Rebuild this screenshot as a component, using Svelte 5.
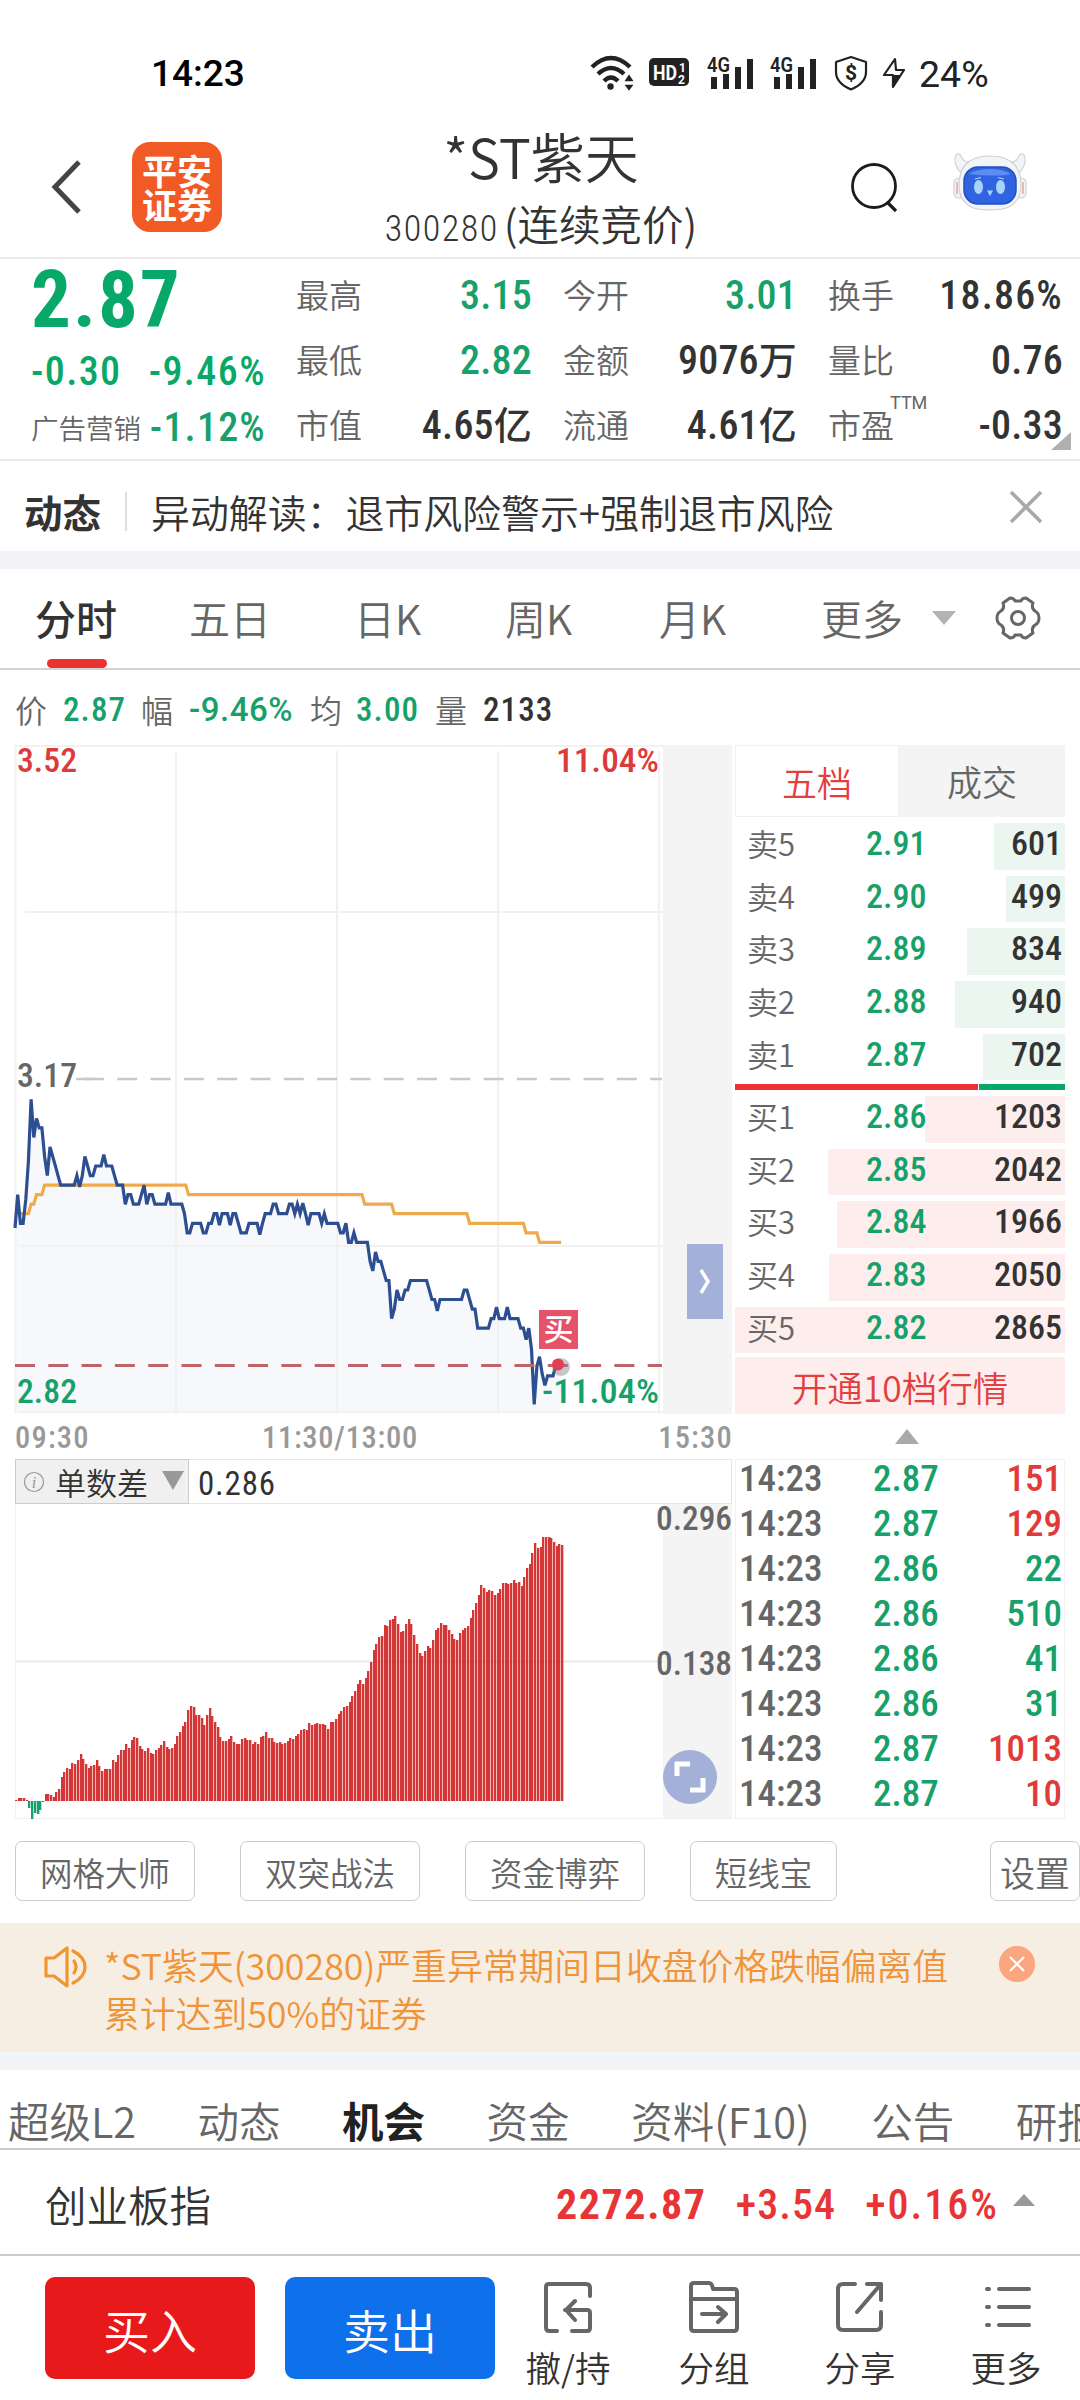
<script>
  const quotes = [
    { label: '最高', value: '3.15', tone: 'down' },
    { label: '今开', value: '3.01', tone: 'down' },
    { label: '换手', value: '18.86%', tone: 'percent' },
    { label: '最低', value: '2.82', tone: 'down' },
    { label: '金额', value: '9076', unit: '万' },
    { label: '量比', value: '0.76' },
    { label: '市值', value: '4.65', unit: '亿' },
    { label: '流通', value: '4.61', unit: '亿' },
    { label: '市盈', value: '-0.33', sup: 'TTM' },
  ];

  const periods = ['分时', '五日', '日K', '周K', '月K', '更多'];
  let period = '分时';

  // volume and the width of its depth bar
  const asks = [
    { name: '卖5', price: '2.91', volume: 601, bar: 71 },
    { name: '卖4', price: '2.90', volume: 499, bar: 59 },
    { name: '卖3', price: '2.89', volume: 834, bar: 98 },
    { name: '卖2', price: '2.88', volume: 940, bar: 110 },
    { name: '卖1', price: '2.87', volume: 702, bar: 82 },
  ];
  const bids = [
    { name: '买1', price: '2.86', volume: 1203, bar: 140 },
    { name: '买2', price: '2.85', volume: 2042, bar: 237 },
    { name: '买3', price: '2.84', volume: 1966, bar: 228 },
    { name: '买4', price: '2.83', volume: 2050, bar: 236 },
    { name: '买5', price: '2.82', volume: 2865, bar: 330 },
  ];

  const trades = [
    ['2.87', 151, 'up'],
    ['2.87', 129, 'up'],
    ['2.86', 22, 'down'],
    ['2.86', 510, 'down'],
    ['2.86', 41, 'down'],
    ['2.86', 31, 'down'],
    ['2.87', 1013, 'up'],
    ['2.87', 10, 'up'],
  ];

  // [minute of the session, price in cents]
  const price = [
    [0, 301.5], [1, 305], [2, 302], [3, 302], [4, 304.5], [5, 308.5], [6, 315], [7, 311], [8, 313], [9, 312],
    [10, 312], [11, 309], [12, 307], [13, 310], [14, 309], [15, 308], [16, 307], [17, 306], [22, 306],
    [23, 307], [24, 305.8], [25, 307], [26, 309], [27, 308], [28, 307], [29, 307], [30, 308], [32, 308],
    [33, 309.2], [34, 308], [36, 308], [37, 307], [38, 306], [40, 306], [41, 304], [42, 305], [43, 305],
    [44, 304], [46, 304], [47, 305], [48, 306], [49, 304], [50, 305], [51, 305], [52, 304], [56, 304],
    [57, 305.2], [58, 304], [62, 304], [63, 303], [64, 301], [65, 301], [66, 302], [69, 302], [70, 301],
    [71, 301], [72, 302], [73, 302], [74, 303], [75, 303], [76, 301.8], [77, 303], [79, 303], [80, 301.8],
    [81, 303], [82, 303], [83, 302], [84, 301], [86, 301], [87, 302], [90, 302], [91, 300.8], [92, 302],
    [93, 303], [95, 303], [96, 304], [97, 304], [98, 303], [101, 303], [102, 304], [103, 304], [104, 303],
    [105, 304], [106, 303], [107, 304.1], [108, 303], [109, 301.8], [110, 303], [113, 303], [114, 302],
    [115, 303], [116, 302], [120, 302], [121, 301], [122, 301], [123, 302], [124, 300], [125, 300],
    [126, 301], [127, 300], [131, 300], [132, 298], [133, 297], [134, 299], [135, 298], [136, 298],
    [137, 297], [138, 296], [139, 296], [140, 292], [141, 293], [142, 295], [143, 294], [144, 294],
    [145, 295], [146, 295], [147, 296], [153, 296], [154, 295], [155, 294], [156, 294], [157, 292.8],
    [158, 294], [166, 294], [167, 295], [168, 295], [169, 294], [170, 293], [171, 293], [172, 291],
    [176, 291], [177, 292], [178, 292], [179, 293.2], [180, 292], [182, 292], [183, 293.2], [184, 292],
    [187, 292], [188, 291], [189, 291], [190, 289.8], [191, 291], [192, 288.8], [193, 283], [194, 287],
    [195, 288], [196, 286.2], [197, 285], [198, 286], [200, 286], [201, 287], [203, 287],
  ];
  const average = [
    [2, 303], [5, 303], [6, 304], [7, 304], [8, 305], [10, 305], [11, 306], [63.5, 306], [64.5, 305],
    [129, 305], [130, 304], [140, 304], [141, 303], [168, 303], [169, 302], [189, 302], [190, 301],
    [194, 301], [195, 300], [203, 300],
  ];

  // one bar a minute, in pixels above or below the zero line
  const orderDiff = [
    1, 3, 3, 3, 1, -7, -18, -12, -13, -9, -1, 7, 7, 6, 4, 9, 12, 24, 29, 33, 32, 38, 37, 41, 47, 42, 37, 33,
    35, 36, 41, 35, 30, 32, 32, 32, 41, 39, 46, 51, 51, 57, 53, 61, 64, 63, 55, 52, 50, 53, 48, 47, 51, 53,
    56, 60, 54, 52, 53, 57, 65, 69, 75, 79, 91, 95, 94, 86, 86, 83, 76, 86, 93, 85, 79, 74, 64, 60, 60, 62,
    65, 59, 57, 57, 62, 63, 61, 61, 57, 59, 57, 64, 65, 69, 63, 63, 59, 58, 59, 57, 58, 60, 63, 62, 65, 67,
    71, 72, 71, 78, 76, 77, 78, 77, 77, 76, 72, 79, 79, 82, 87, 90, 94, 95, 99, 105, 110, 117, 121, 117, 123,
    130, 139, 151, 157, 164, 165, 176, 175, 181, 182, 185, 177, 169, 170, 177, 182, 177, 166, 157, 148, 145,
    150, 155, 153, 161, 171, 173, 178, 176, 176, 171, 167, 162, 161, 168, 171, 173, 175, 183, 191, 198, 206,
    216, 213, 209, 211, 210, 206, 208, 212, 218, 218, 217, 218, 221, 218, 219, 215, 224, 233, 237, 248, 258,
    253, 254, 264, 264, 264, 263, 259, 255, 257, 256,
  ];

  const minute = 2.69;
  const px = (m) => (m * minute).toFixed(1);
  const py = (cents) => (354.3 + (315 - cents) * 9.535).toFixed(1);
  const toPoints = (list) => list.map(([m, c]) => `${px(m)},${py(c)}`).join(' ');

  const pricePoints = toPoints(price);
  const averagePoints = toPoints(average);
  const areaPoints = `0,668 ${pricePoints} ${px(203)},668`;

  const bars = orderDiff.map((h, i) => ({
    x: Math.round(i * minute),
    y: h > 0 ? 297 - h : 297,
    height: Math.abs(h),
    fill: h > 0 ? '#d43636' : '#17a069',
  }));

  const sections = ['超级L2', '动态', '机会', '资金', '资料(F10)', '公告', '研报'];
  let section = '机会';
</script>

<div class="screen">
  <div class="status">
    <span class="clock num">14:23</span>
    <svg class="wifi" width="46" height="36" viewBox="0 0 46 36">
      <g fill="none" stroke="#222" stroke-width="4.4">
        <path d="M2 12 Q21 -6 40 12" />
        <path d="M8 19 Q21 7 34 19" />
        <path d="M14 26 Q21 19 28 26" />
      </g>
      <circle cx="20.5" cy="31.5" r="3.2" fill="#222" />
      <path d="M33 27 l6 -9 6 9z M33 29 h12 l-6 8z" fill="#222" stroke="#fff" stroke-width="1.5" />
    </svg>
    <svg class="hd" width="40" height="30" viewBox="0 0 40 30">
      <rect width="40" height="28" rx="5" fill="#222" />
      <text x="4" y="21.5" class="hd-text" textLength="24" lengthAdjust="spacingAndGlyphs">HD</text>
      <text x="30" y="13.5" class="hd-small">1</text>
      <text x="29" y="25.5" class="hd-small">2</text>
    </svg>
    {#each [0, 1] as sim}
      <svg class="signal" width="47" height="34" viewBox="0 0 47 34">
        <text x="0" y="15.5" class="net" textLength="23" lengthAdjust="spacingAndGlyphs">4G</text>
        <path d="M4 21 h6 v12 h-6z M16 18 h6 v15 h-6z M28 11 h6 v22 h-6z M40 3 h6 v30 h-6z" fill="#222" />
      </svg>
    {/each}
    <svg class="shield" width="34" height="36" viewBox="0 0 34 36">
      <path d="M17 2 L32 7 V17 Q32 28 17 34.5 Q2 28 2 17 V7z" fill="none" stroke="#222" stroke-width="2.2" stroke-linejoin="round" />
      <text x="17" y="25" class="dollar" text-anchor="middle">$</text>
    </svg>
    <svg class="bolt" width="26" height="34" viewBox="0 0 26 34">
      <path d="M14 3 L3 19 H12 V31 L23 14 H15z" fill="none" stroke="#222" stroke-width="2.2" stroke-linejoin="round" />
      <path d="M12 19 H20 L12 31z" fill="#222" />
    </svg>
    <span class="battery num">24%</span>
  </div>

  <header>
    <svg class="back" width="32" height="56" viewBox="0 0 32 56">
      <path d="M28 3 L4 28 L28 53" fill="none" stroke="#444" stroke-width="5" />
    </svg>
    <div class="broker"><span>平安</span><span>证券</span></div>
    <div class="title">
      <h1>*ST紫天</h1>
      <p><span class="num code">300280</span>(连续竞价)</p>
    </div>
    <svg class="search" width="50" height="54" viewBox="0 0 50 54">
      <circle cx="24" cy="25" r="21.5" fill="none" stroke="#1c1c1c" stroke-width="2.8" />
      <path d="M37 41 L46 50" stroke="#1c1c1c" stroke-width="3.2" />
    </svg>
    <svg class="robot" width="74" height="60" viewBox="0 0 74 60">
      <g fill="#f3f4f8" stroke="#cfd2d9" stroke-width="1.2">
        <path d="M9 22 Q-1 12 3 3 Q6 -1 9 6 Q12 12 22 9z" />
        <path d="M65 22 Q75 12 71 3 Q68 -1 65 6 Q62 12 52 9z" />
        <rect x="1" y="26" width="10" height="20" rx="5" />
        <rect x="63" y="26" width="10" height="20" rx="5" />
        <path d="M12 13 Q20 4 37 4 Q54 4 62 13 Q68 20 68 34 Q68 48 56 55 Q50 58 37 58 Q24 58 18 55 Q6 48 6 34 Q6 20 12 13z" />
      </g>
      <path d="M4 30 V42 M70 30 V42" stroke="#e0a9a0" stroke-width="1.5" />
      <rect x="11" y="15" width="52" height="37" rx="14" fill="#2f63e2" stroke="#2450bd" stroke-width="1.5" />
      <path d="M16 22 Q24 17 37 17 Q50 17 58 22 Q45 25 16 22z" fill="#5b8df3" />
      <ellipse cx="25.5" cy="35" rx="4.5" ry="7" fill="#a9d2f8" />
      <ellipse cx="47.5" cy="35" rx="4.5" ry="7" fill="#a9d2f8" />
      <path d="M22 27 l6 -1.5 M45 25.5 l6 1.5 M35 39 h4 l-2 4z" fill="#a9d2f8" stroke="#a9d2f8" stroke-width="1.2" />
    </svg>
  </header>

  <section class="quote">
    <div class="last">
      <strong class="num">2.87</strong>
      <div class="change num"><span>-0.30</span><span>-9.46%</span></div>
      <div class="sector"><span>广告营销</span><b class="num">-1.12%</b></div>
    </div>
    <div class="stats">
      {#each quotes as q}
        <div class="stat">
          <span class="label">{q.label}{#if q.sup}<sup>{q.sup}</sup>{/if}</span>
          <span class="value num {q.tone ?? ''}">{q.value}{#if q.unit}<i>{q.unit}</i>{/if}</span>
        </div>
      {/each}
    </div>
    <i class="corner"></i>
  </section>

  <section class="news">
    <b>动态</b>
    <p>异动解读：退市风险警示+强制退市风险</p>
    <svg width="34" height="34" viewBox="0 0 34 34">
      <path d="M2 2 L32 32 M32 2 L2 32" stroke="#a8a8a8" stroke-width="3.6" />
    </svg>
  </section>

  <div class="band"></div>

  <nav class="periods">
    {#each periods as p}
      <button class:active={period === p} on:click={() => (period = p)}>{p}</button>
    {/each}
    <i class="caret"></i>
    <svg class="gear" width="46" height="46" viewBox="0 0 46 46">
      <path
        d="M15 3 Q19 3 20 6 H26 Q27 3 31 3 L38 8 Q36 13 40 16 Q44 18 44 23 Q44 28 40 30 Q36 33 38 38 L31 43 Q27 43 26 40 H20 Q19 43 15 43 L8 38 Q10 33 6 30 Q2 28 2 23 Q2 18 6 16 Q10 13 8 8z"
        fill="none" stroke="#666" stroke-width="3" stroke-linejoin="round"
      />
      <circle cx="23" cy="23" r="6.5" fill="none" stroke="#666" stroke-width="3" />
    </svg>
  </nav>

  <div class="market">
    <div class="left">
      <div class="legend">
        <span>价</span><b class="num down">2.87</b>
        <span>幅</span><b class="num down wide">-9.46%</b>
        <span>均</span><b class="num down">3.00</b>
        <span>量</span><b class="num">2133</b>
      </div>

      <svg class="chart" width="718" height="669" viewBox="0 0 718 669">
        <rect x="648" y="0" width="69" height="669" fill="#f4f4f4" />
        <polygon points={areaPoints} fill="#f6f8fb" />
        <g stroke="#f1f1f1" stroke-width="2">
          <path d="M0 1 H648 M10 167 H648 M5 501 H648 M5 667 H648" />
          <path d="M0.5 0 V669 M161 6 V669 M322 6 V669 M483 6 V669 M644 6 V669" />
        </g>
        <path d="M61 334 H647" stroke="#c8c8c8" stroke-width="2.4" stroke-dasharray="20 13.3" stroke-dashoffset="-8" />
        <path d="M61 334 H78" stroke="#c8c8c8" stroke-width="2.4" />
        <polyline points={averagePoints} fill="none" stroke="#efab4b" stroke-width="3.2" />
        <polyline points={pricePoints} fill="none" stroke="#2d4f92" stroke-width="3.2" />
        <path d="M0 620.5 H647" stroke="#bd6468" stroke-width="3" stroke-dasharray="20 13.3" />
        <circle cx="546" cy="622" r="9" fill="#8a8088" opacity="0.45" />
        <circle cx="543" cy="619.5" r="6" fill="#e03f56" />
        <rect x="524" y="565" width="39" height="39" fill="#e45367" />
        <text x="543.5" y="595" class="mark" text-anchor="middle">买</text>
        <g class="axis num">
          <text x="2" y="27" fill="#dc3b3b" textLength="60" lengthAdjust="spacingAndGlyphs">3.52</text>
          <text x="541" y="27" fill="#dc3b3b" textLength="103" lengthAdjust="spacingAndGlyphs">11.04%</text>
          <text x="2" y="342" fill="#666" textLength="60" lengthAdjust="spacingAndGlyphs">3.17</text>
          <text x="2" y="658" fill="#17a069" textLength="60" lengthAdjust="spacingAndGlyphs">2.82</text>
          <text x="527" y="658" fill="#17a069" textLength="117" lengthAdjust="spacingAndGlyphs">-11.04%</text>
        </g>
        <rect x="672" y="499" width="36" height="75" fill="#a3b1d9" />
        <path d="M686 525 L693 536.5 L686 548" fill="none" stroke="#fff" stroke-width="3.5" />
      </svg>

      <div class="times num"><span>09:30</span><span class="noon">11:30/13:00</span><span>15:30</span></div>

      <div class="indicator">
        <div class="picker">
          <svg width="22" height="22" viewBox="0 0 22 22">
            <circle cx="11" cy="11" r="9.5" fill="none" stroke="#999" stroke-width="1.2" />
            <text x="11" y="16.5" class="info" text-anchor="middle">i</text>
          </svg>
          <span>单数差</span>
          <i class="caret"></i>
        </div>
        <span class="num reading">0.286</span>
      </div>
      <svg class="chart" width="718" height="315" viewBox="0 0 718 315">
        <rect x="648" y="0" width="69" height="315" fill="#f4f4f4" />
        <path d="M0 157.5 H648" stroke="#e9e9e9" stroke-width="2" />
        <path d="M0.5 0 V314.5 H717" fill="none" stroke="#f1f1f1" stroke-width="1" />
        {#each bars as bar}
          <rect x={bar.x} y={bar.y} width="3" height={bar.height} fill={bar.fill} opacity="0.35" />
        {/each}
        {#each bars as bar}
          <rect x={bar.x} y={bar.y} width="2" height={bar.height} fill={bar.fill} />
        {/each}
        <g class="axis num" fill="#666">
          <text x="641" y="26" textLength="76" lengthAdjust="spacingAndGlyphs">0.296</text>
          <text x="641" y="171" textLength="76" lengthAdjust="spacingAndGlyphs">0.138</text>
        </g>
        <circle cx="675" cy="273" r="27" fill="#a3b1d9" />
        <path d="M662 272 V260 H675 M688 274 V286 H675" fill="none" stroke="#fff" stroke-width="5" />
      </svg>
    </div>

    <div class="right">
      <div class="book-tabs"><span class="active">五档</span><span>成交</span></div>
      <div class="book asks">
        {#each asks as row}
          <div class="level">
            <span class="depth" style="width: {row.bar}px"></span>
            <span class="name">{row.name}</span>
            <span class="num down">{row.price}</span>
            <span class="num volume">{row.volume}</span>
          </div>
        {/each}
      </div>
      <div class="ratio"><i></i><i></i></div>
      <div class="book bids">
        {#each bids as row}
          <div class="level">
            <span class="depth" style="width: {row.bar}px"></span>
            <span class="name">{row.name}</span>
            <span class="num down">{row.price}</span>
            <span class="num volume">{row.volume}</span>
          </div>
        {/each}
      </div>
      <button class="unlock">开通10档行情</button>
      <i class="fold"></i>
      <div class="trades num">
        {#each trades as [p, volume, tone]}
          <div class="trade">
            <span>14:23</span><span class="down">{p}</span><span class={tone}>{volume}</span>
          </div>
        {/each}
      </div>
    </div>
  </div>

  <div class="tools">
    <button>网格大师</button>
    <button>双突战法</button>
    <button>资金博弈</button>
    <button class="short">短线宝</button>
    <button class="setup">设置</button>
  </div>

  <div class="notice">
    <svg class="speaker" width="44" height="44" viewBox="0 0 44 44">
      <g fill="none" stroke="#f0952f" stroke-width="3.2" stroke-linejoin="round" stroke-linecap="round">
        <path d="M3 13 H11 L24 3 V41 L11 31 H3z" />
        <path d="M31 16 Q35 22 31 28" />
        <path d="M30 6 Q42 12 42 22 Q42 32 30 38" />
      </g>
    </svg>
    <p>*ST紫天(300280)严重异常期间日收盘价格跌幅偏离值<br />累计达到50%的证券</p>
    <svg class="dismiss" width="36" height="36" viewBox="0 0 36 36">
      <circle cx="18" cy="18" r="18" fill="#fba67e" />
      <path d="M11 11 L25 25 M25 11 L11 25" stroke="#fff" stroke-width="2.2" />
    </svg>
  </div>

  <div class="band"></div>

  <nav class="sections">
    {#each sections as s}
      <button class:active={section === s} on:click={() => (section = s)}>{s}</button>
    {/each}
  </nav>

  <div class="index">
    <span class="index-name">创业板指</span>
    <b class="num">2272.87</b>
    <span class="num diff">+3.54</span>
    <span class="num rate">+0.16%</span>
    <i></i>
  </div>

  <footer>
    <button class="trade-btn buy">买入</button>
    <button class="trade-btn sell">卖出</button>
    <div class="action">
      <svg width="50" height="52" viewBox="0 0 50 52">
        <path d="M47 15 V7 Q47 3 43 3 H6 Q3 3 3 6 V46 Q3 50 6 50 H14 M29 50 H44 Q47 50 47 47 V32 Q47 29 44 29 H22 M32 20 L23 29 L32 39" />
      </svg>
      <span>撤/持</span>
    </div>
    <div class="action">
      <svg width="50" height="52" viewBox="0 0 50 52">
        <path d="M2 47 V5 Q2 2 5 2 H20 Q23 2 24 8 H45 Q48 8 48 11 V47 Q48 50 45 50 H5 Q2 50 2 47z M2 18 H48 M13 33 H36 M29 26 L37 33 L29 41" />
      </svg>
      <span>分组</span>
    </div>
    <div class="action">
      <svg width="50" height="52" viewBox="0 0 50 52">
        <path d="M20 3 H8 Q3 3 3 8 V44 Q3 49 8 49 H41 Q46 49 46 44 V31 M32 3 H46 V19 M46 3 L22 31" />
      </svg>
      <span>分享</span>
    </div>
    <div class="action">
      <svg width="50" height="52" viewBox="0 0 50 52">
        <path d="M6 8 H8 M18 8 H48 M6 26 H8 M18 26 H48 M6 44 H8 M18 44 H48" />
      </svg>
      <span>更多</span>
    </div>
  </footer>
</div>

<style>
  :global(body) {
    background: #fff;
  }

  .screen {
    width: 1080px;
    height: 2400px;
    overflow: hidden;
    background: #fff;
    color: #333;
    font-family: 'Noto Sans CJK SC', sans-serif;
    font-weight: 350;
  }

  .screen :global(*) {
    box-sizing: border-box;
  }

  svg {
    display: block;
    flex: none;
    overflow: visible;
  }

  h1,
  p {
    margin: 0;
    font-weight: inherit;
  }

  i {
    font-style: normal;
  }

  button {
    padding: 0;
    border: 0;
    background: none;
    color: inherit;
    font: inherit;
    white-space: nowrap;
  }

  .num {
    font-family: Roboto, 'Noto Sans CJK SC', sans-serif;
    font-stretch: 87.5%;
    font-weight: 500;
    white-space: nowrap;
  }

  .down {
    color: #17a069;
  }

  .up {
    color: #e03a3a;
  }

  .status {
    display: flex;
    align-items: center;
    height: 100px;
    padding: 46px 0 0 151px;
    color: #222;
  }

  .clock {
    width: 439px;
    color: #000;
    font-size: 37px;
    font-stretch: 100%;
    font-weight: 460;
  }

  .hd {
    margin: 0 18px 0 13px;
  }

  .signal {
    margin-right: 15.5px;
  }

  .shield {
    margin: 0 13px 0 2px;
  }

  .bolt {
    margin-right: 12px;
  }

  .battery {
    padding-top: 2px;
    font-size: 37.5px;
    font-stretch: 100%;
    font-weight: 400;
  }

  .hd-text,
  .hd-small {
    fill: #fff;
    font: 700 20px Roboto, sans-serif;
  }

  .hd-small {
    font-size: 12px;
  }

  .net {
    fill: #222;
    font: 600 19.5px Roboto, sans-serif;
  }

  .dollar {
    fill: #222;
    font: 700 21px Roboto, sans-serif;
  }

  header {
    display: flex;
    align-items: center;
    height: 159px;
    padding: 16px 0 0 51px;
    border-bottom: 2px solid #ebebeb;
  }

  .back {
    margin-right: 49px;
  }

  .broker {
    display: flex;
    flex-direction: column;
    justify-content: center;
    width: 90px;
    height: 90px;
    border-radius: 18px;
    background: #f15a24;
    color: #fff;
    font-size: 35px;
    font-weight: 700;
    line-height: 34px;
    text-align: center;
  }

  .title {
    width: 638px;
    padding-top: 11px;
    text-align: center;
  }

  .title h1 {
    font-size: 54px;
    line-height: 69px;
  }

  .title p {
    font-size: 41.5px;
    line-height: 67px;
  }

  .title .code {
    margin-right: 5px;
    font-size: 36px;
    font-weight: 300;
    letter-spacing: 1.5px;
  }

  .search {
    margin: 2px 0 0 -10px;
  }

  .robot {
    margin: -10px 0 0 53px;
  }

  .quote {
    position: relative;
    display: flex;
    height: 202px;
    border-bottom: 2px solid #ebebeb;
  }

  .last {
    width: 296px;
    padding: 1px 0 0 31px;
    color: #08a868;
  }

  .last strong {
    display: block;
    height: 80px;
    font-size: 79px;
    font-weight: 700;
    letter-spacing: 2px;
    line-height: 81px;
  }

  .change {
    display: flex;
    justify-content: space-between;
    width: 235px;
    font-size: 40px;
    letter-spacing: 1.4px;
    line-height: 63px;
  }

  .sector {
    display: flex;
    justify-content: space-between;
    width: 235px;
    color: #666;
    font-size: 27.5px;
    line-height: 49px;
  }

  .sector b {
    color: #17a069;
    font-size: 40px;
    letter-spacing: 1.2px;
  }

  .stats {
    display: grid;
    grid-template-columns: 236px 234px 235px;
    grid-auto-rows: 65px;
    column-gap: 31px;
    padding-top: 4px;
  }

  .stat {
    display: flex;
    align-items: center;
    justify-content: space-between;
  }

  .label {
    position: relative;
    margin-top: -3px;
    color: #666;
    font-size: 33px;
  }

  .label sup {
    position: absolute;
    top: -8px;
    left: 62px;
    font: 18px Roboto, sans-serif;
  }

  .value {
    font-size: 40px;
    letter-spacing: 0.2px;
  }

  .value.percent {
    letter-spacing: 1.2px;
  }

  .value i {
    font-size: 38px;
    line-height: 0;
  }

  .corner {
    position: absolute;
    right: 9px;
    bottom: 9px;
    border: solid transparent;
    border-width: 0 0 18px 20px;
    border-bottom-color: #b0b0b0;
  }

  .news {
    display: flex;
    align-items: center;
    height: 90px;
    padding: 11px 37px 0 24px;
    font-size: 38.9px;
  }

  .news b {
    width: 103px;
    height: 39px;
    border-right: 2px solid #ddd;
    font-weight: 700;
    font-size: 38.5px;
    line-height: 38px;
  }

  .news p {
    flex: 1;
    margin-top: -2px;
    padding-left: 24px;
  }

  .news svg {
    margin-top: -9px;
  }

  .band {
    height: 18px;
    background: #f3f4f8;
  }

  .periods {
    display: grid;
    grid-template-columns: 154px 165px 151px 154px 162px 111px 63px auto;
    align-items: center;
    justify-content: start;
    height: 101px;
    padding-left: 35px;
    border-bottom: 2px solid #d3d3d3;
    color: #666;
    font-size: 41px;
  }

  .periods button {
    position: relative;
    height: 99px;
    padding-bottom: 3px;
    text-align: left;
  }

  .periods .active {
    color: #333;
    font-weight: 500;
  }

  .periods .active::after {
    position: absolute;
    bottom: 0;
    left: 12px;
    width: 60px;
    height: 9px;
    border-radius: 5px;
    background: #eb3233;
    content: '';
  }

  .periods .caret {
    justify-self: start;
    margin-top: -2px;
    border: solid transparent;
    border-width: 14px 12px 0;
    border-top-color: #b3b3b3;
  }

  .gear {
    margin-top: -2px;
  }

  .market {
    display: flex;
    height: 1150px;
  }

  .left {
    width: 735px;
    padding-left: 15px;
  }

  .legend {
    display: grid;
    grid-template-columns: 48px 78px 48px 121px 46px 79px 48px auto;
    align-items: center;
    justify-content: start;
    height: 75px;
    padding-top: 3px;
    color: #666;
    font-size: 32px;
  }

  .legend b {
    font-size: 33px;
    letter-spacing: 1.1px;
  }

  .legend .wide {
    font-stretch: 100%;
    letter-spacing: 0.5px;
  }

  .legend b:last-child {
    color: #333;
  }

  .axis {
    font-size: 33px;
  }

  .mark {
    fill: #fff;
    font-size: 30px;
    font-weight: 500;
  }

  .times {
    display: grid;
    grid-template-columns: 247px 1fr auto;
    width: 718px;
    height: 45px;
    color: #999;
    font-size: 30.5px;
    letter-spacing: 1.2px;
    line-height: 48px;
  }

  .times .noon {
    letter-spacing: 0.7px;
  }

  .indicator {
    display: flex;
    width: 717px;
    height: 45px;
    border: 1px solid #e6e6e6;
    border-left: 0;
  }

  .picker {
    display: flex;
    align-items: center;
    width: 174px;
    margin: -1px 0;
    padding-left: 7px;
    border: 1px solid #ccc;
    background: #f0f0f0;
    font-size: 31px;
  }

  .picker span {
    margin: 0 14px 0 10px;
  }

  .picker .caret {
    margin-top: -2px;
    border: solid transparent;
    border-width: 19px 11px 0;
    border-top-color: #999;
  }

  .info {
    fill: #999;
    font: italic 16px 'Liberation Serif', serif;
  }

  .reading {
    padding-left: 9px;
    font-size: 33px;
    font-weight: 400;
    letter-spacing: 0.8px;
    line-height: 48px;
  }

  .right {
    width: 330px;
    padding-top: 75px;
  }

  .book-tabs {
    display: flex;
    height: 72px;
    margin-bottom: 6px;
    color: #666;
    font-size: 35px;
    line-height: 72px;
    text-align: center;
  }

  .book-tabs span {
    width: 166px;
    background: #f4f4f4;
  }

  .book-tabs .active {
    width: 164px;
    border: 1px solid #f1f1f1;
    background: #fff;
    color: #e2403f;
  }

  .level {
    position: relative;
    display: grid;
    grid-template-columns: 119px 1fr auto;
    height: 46.5px;
    margin-bottom: 6.2px;
    padding: 0 3px 0 12px;
    font-size: 34px;
    line-height: 41px;
  }

  .depth {
    position: absolute;
    top: 0;
    right: 0;
    height: 100%;
    background: #eaf6ef;
  }

  .bids .depth {
    background: #fdeeed;
  }

  .level .name {
    color: #666;
    font-size: 31px;
    line-height: 39px;
  }

  .level .name,
  .level .num {
    position: relative;
  }

  .asks,
  .bids {
    height: 261px;
  }

  .ratio {
    display: flex;
    gap: 1px;
    height: 6px;
    margin-bottom: 6px;
  }

  .ratio i {
    width: 86px;
    background: #08a868;
  }

  .ratio i:first-child {
    width: 243px;
    background: #eb3233;
  }

  .unlock {
    display: block;
    width: 330px;
    height: 57px;
    background: #fdeeed;
    color: #e2403f;
    font-size: 35.5px;
    line-height: 60px;
  }

  .fold {
    display: block;
    width: 0;
    margin: 15px 0 15px 160px;
    border: solid transparent;
    border-width: 0 12px 15px;
    border-bottom-color: #aaa;
  }

  .trades {
    height: 360px;
    border: 1px solid #f1f1f1;
    color: #666;
    font-size: 37px;
    line-height: 37px;
  }

  .trade {
    display: grid;
    grid-template-columns: 134px 80px 1fr;
    height: 45px;
    padding: 0 2px 0 3px;
  }

  .trade span:last-child {
    text-align: right;
  }

  .tools {
    display: flex;
    height: 103px;
    padding: 21px 0 0 15px;
    color: #666;
  }

  .tools button {
    width: 180px;
    height: 60px;
    margin-right: 45px;
    padding-top: 1px;
    border: 1.5px solid #ccc;
    border-radius: 7px;
    font-size: 32.5px;
  }

  .tools .short {
    width: 147px;
  }

  .tools .setup {
    width: 90px;
    margin: 0 0 0 auto;
    font-size: 35px;
  }

  .notice {
    display: flex;
    height: 129px;
    padding: 17px 45px 0 43px;
    background: #f6ede3;
    color: #ef9438;
  }

  .speaker {
    margin: 5px 17px 0 0;
  }

  .notice p {
    flex: 1;
    font-size: 35.8px;
    line-height: 48px;
    white-space: nowrap;
  }

  .dismiss {
    margin-top: 6px;
  }

  .sections {
    display: flex;
    align-items: center;
    gap: 61.5px;
    height: 80px;
    padding: 22px 0 0 8px;
    border-bottom: 2px solid #ccc;
    color: #666;
    font-size: 41.5px;
  }

  .sections .active {
    color: #222;
    font-weight: 700;
  }

  .index {
    display: flex;
    align-items: center;
    height: 106px;
    padding: 4px 45px 0 45px;
    border-bottom: 2px solid #ccc;
    color: #e83434;
    font-size: 42px;
  }

  .index-name {
    flex: 1;
    color: #333;
    font-size: 41.5px;
  }

  .index b {
    font-weight: 700;
    letter-spacing: 1.6px;
  }

  .index .diff,
  .index .rate {
    margin-left: 29px;
    letter-spacing: 1.1px;
  }

  .index .rate {
    letter-spacing: 2px;
  }

  .index i {
    margin: -8px 0 0 14px;
    border: solid transparent;
    border-width: 0 11px 12px;
    border-bottom-color: #999;
  }

  footer {
    display: flex;
    padding: 21px 0 0 45px;
  }

  .trade-btn {
    flex: none;
    width: 210px;
    height: 102px;
    margin-right: 30px;
    padding-top: 1px;
    border-radius: 10px;
    color: #fff;
    font-size: 47px;
  }

  .buy {
    background: #e8191a;
  }

  .sell {
    margin-right: 0;
    background: #0f70ec;
  }

  .action {
    display: flex;
    flex: none;
    flex-direction: column;
    align-items: center;
    width: 146px;
    padding-top: 4px;
    font-size: 35.5px;
  }

  .action svg path {
    fill: none;
    stroke: #666;
    stroke-width: 4;
    stroke-linecap: round;
    stroke-linejoin: round;
  }

  .action span {
    margin-top: 8px;
    line-height: 52px;
  }
</style>
